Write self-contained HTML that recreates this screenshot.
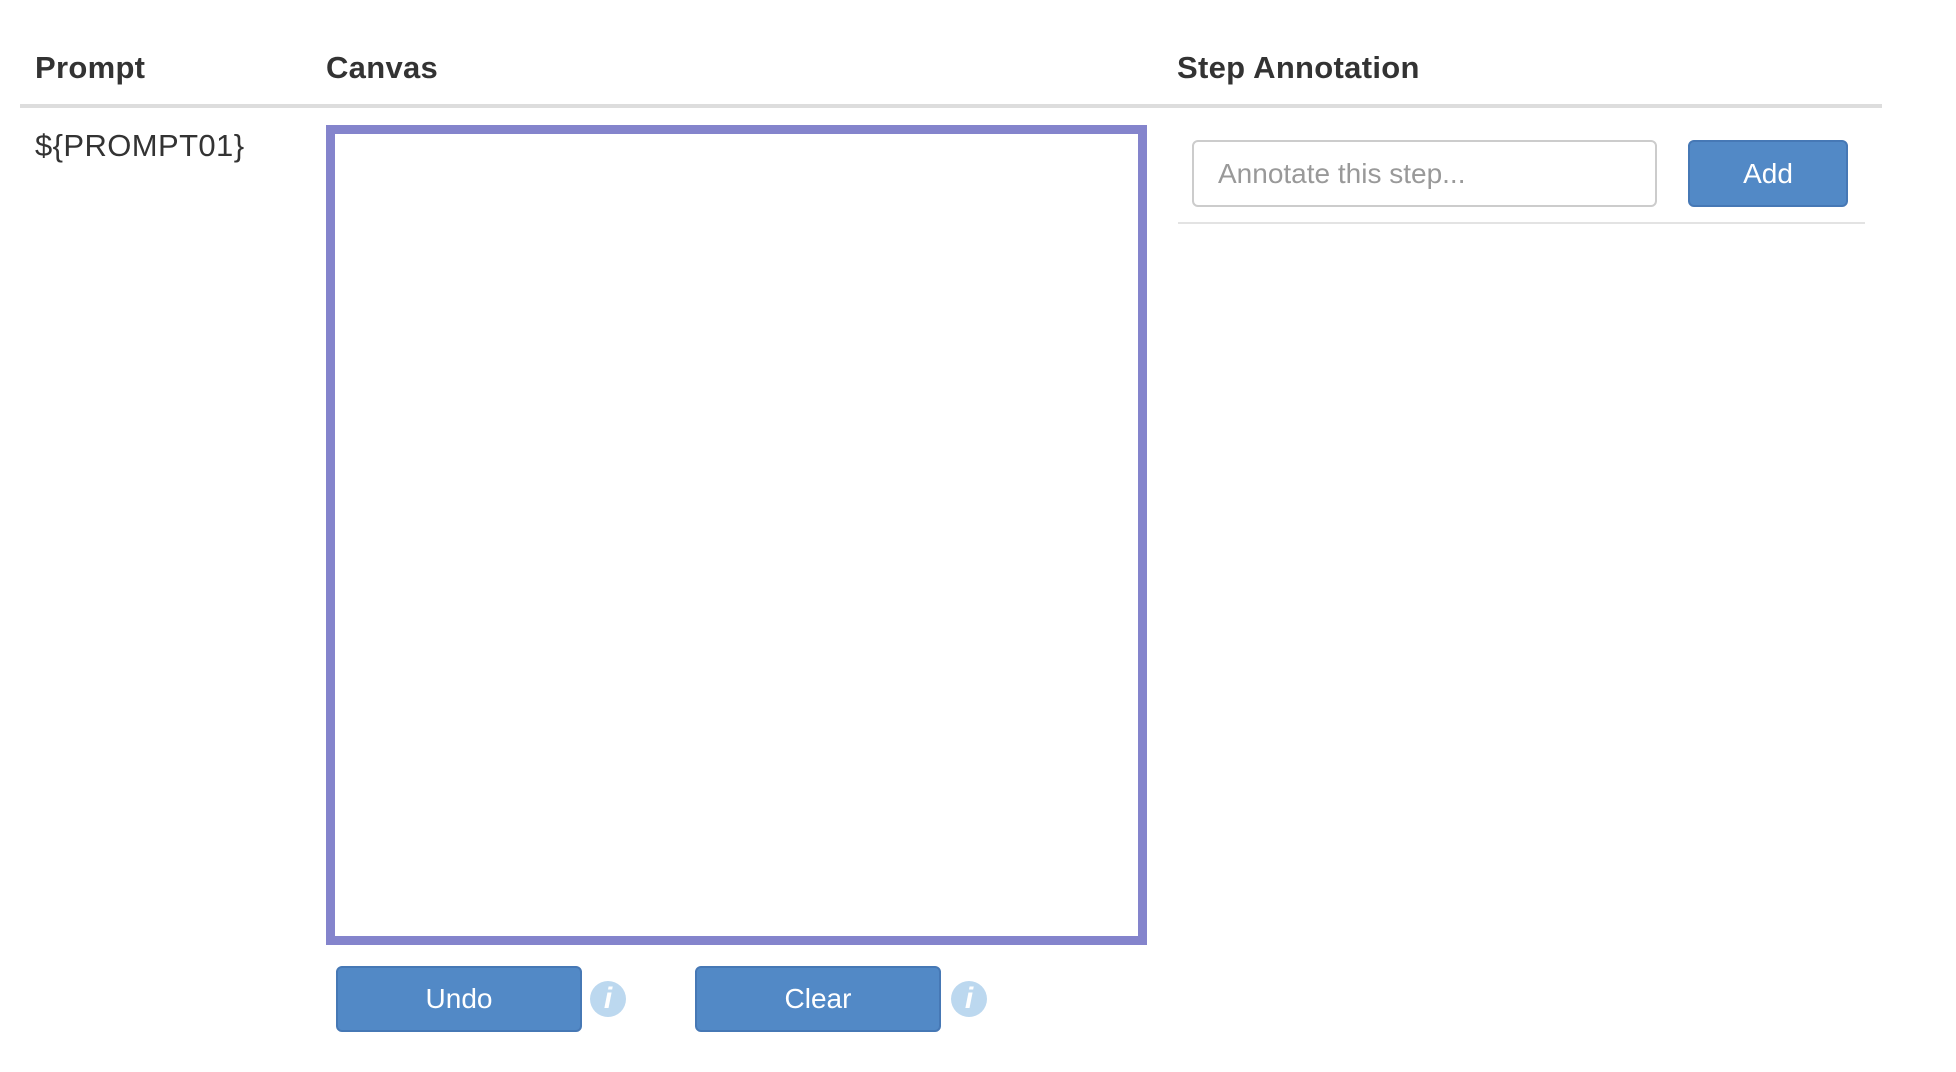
<!DOCTYPE html>
<html><head><meta charset="utf-8"><style>
body{margin:0;width:1956px;height:1072px;background:#fff;font-family:"Liberation Sans",Arial,sans-serif;color:#333;position:relative;overflow:hidden}
.a{position:absolute}
.h{font-weight:bold;font-size:31px;top:50px;line-height:36px;letter-spacing:0.3px}
.btn{position:absolute;background:#5289c6;border:2px solid #4678b5;border-radius:6px;color:#fff;font-size:28px;display:flex;align-items:center;justify-content:center;box-sizing:border-box}
.info{position:absolute;width:36px;height:36px;border-radius:50%;background:#bcd8ef;color:#fff;font:italic bold 30px "Liberation Sans",sans-serif;display:flex;align-items:center;justify-content:center}
</style></head><body>
<div class="a h" style="left:35px">Prompt</div>
<div class="a h" style="left:326px">Canvas</div>
<div class="a h" style="left:1177px">Step Annotation</div>
<div class="a" style="left:20px;top:104px;width:1862px;height:4px;background:#ddd"></div>
<div class="a" style="left:35px;top:128px;font-size:31px;line-height:36px;letter-spacing:0.4px">${PROMPT01}</div>
<div class="a" style="left:326px;top:125px;width:821px;height:820px;border:9px solid #8484cc;box-sizing:border-box"></div>
<div class="a" style="left:1192px;top:140px;width:465px;height:67px;border:2px solid #ccc;border-radius:6px;box-sizing:border-box;font-size:28px;color:#999;padding-left:24px;line-height:63px">Annotate this step...</div>
<div class="btn" style="left:1688px;top:140px;width:160px;height:67px">Add</div>
<div class="a" style="left:1178px;top:222px;width:687px;height:2px;background:#e3e3e3"></div>
<div class="btn" style="left:336px;top:966px;width:246px;height:66px">Undo</div>
<div class="info" style="left:590px;top:981px">i</div>
<div class="btn" style="left:695px;top:966px;width:246px;height:66px">Clear</div>
<div class="info" style="left:951px;top:981px">i</div>
</body></html>
